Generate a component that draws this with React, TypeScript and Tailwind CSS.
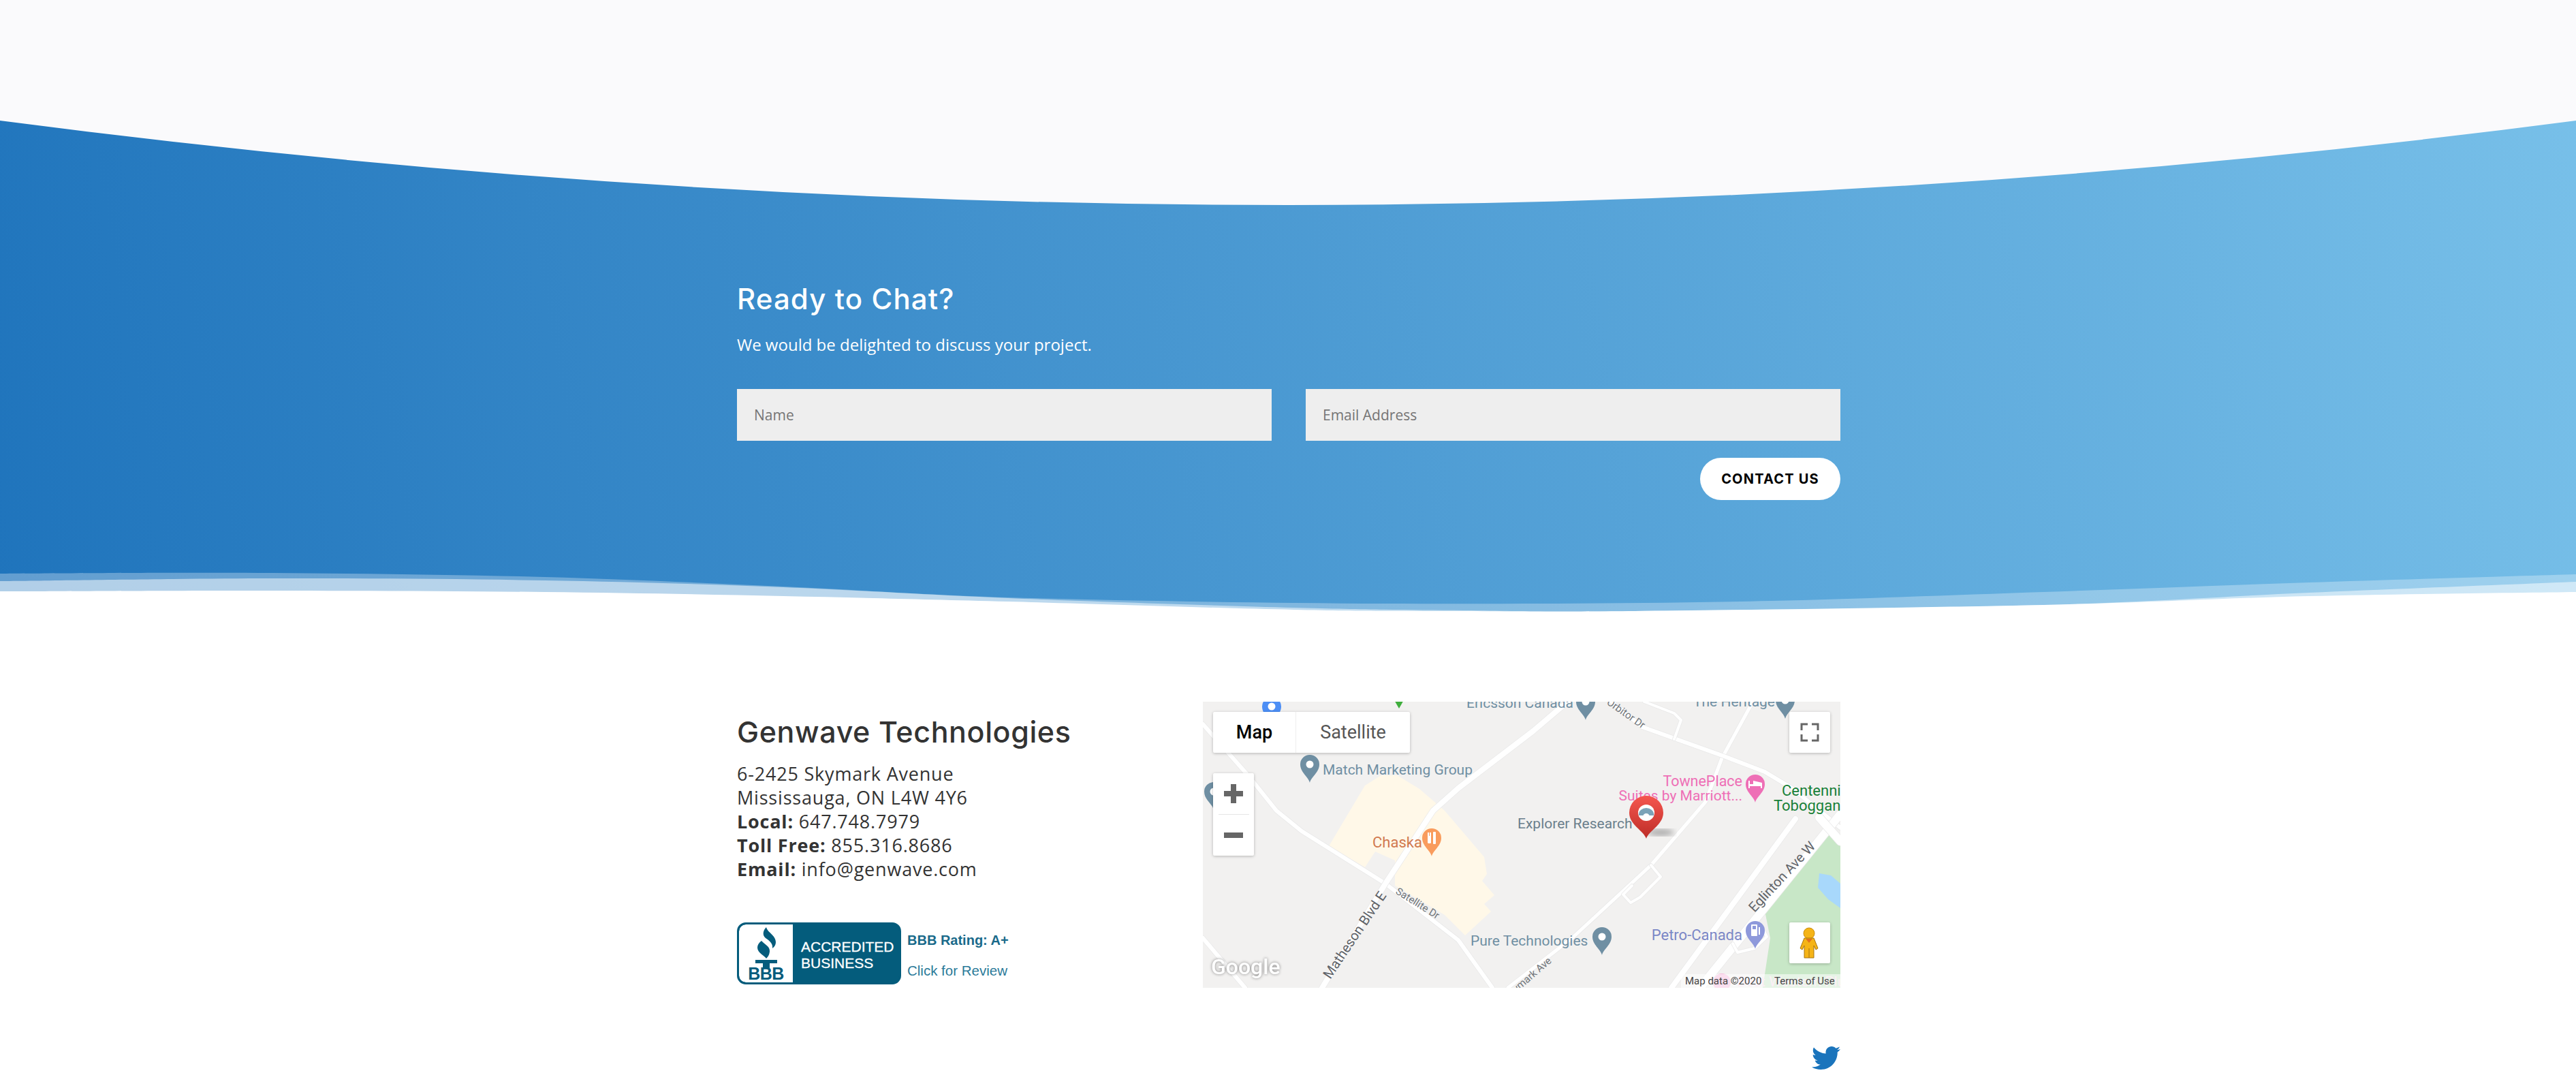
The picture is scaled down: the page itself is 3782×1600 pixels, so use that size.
import { FaTwitter } from "react-icons/fa";

type Pt = [number, number];

// catmull-rom through measured points, gives a soft wave edge
function smooth(pts: Pt[]) {
  let d = `M${pts[0][0]} ${pts[0][1]}`;
  for (let i = 0; i < pts.length - 1; i++) {
    const p0 = pts[Math.max(i - 1, 0)];
    const p1 = pts[i];
    const p2 = pts[i + 1];
    const p3 = pts[Math.min(i + 2, pts.length - 1)];
    d += ` C${p1[0] + (p2[0] - p0[0]) / 6} ${p1[1] + (p2[1] - p0[1]) / 6} ${p2[0] - (p3[0] - p1[0]) / 6} ${p2[1] - (p3[1] - p1[1]) / 6} ${p2[0]} ${p2[1]}`;
  }
  return d;
}

const below = (pts: Pt[]) => `${smooth(pts)} V120 H0 Z`;

// y is relative to the top of the wave svg (page y - 830)
const DARK_EDGE: Pt[] = [[0, 12], [400, 11], [800, 17], [1150, 31], [1480, 47], [1900, 55], [2270, 56], [2600, 52], [3000, 39], [3390, 25], [3782, 13]];
const MID_EDGE: Pt[] = [[0, 23], [400, 19], [800, 22], [1150, 32], [1480, 48], [1900, 62], [2150, 66], [2400, 67], [3000, 58], [3390, 40], [3782, 24]];
const WHITE_EDGE: Pt[] = [[0, 38], [400, 37], [800, 39], [1150, 45], [1480, 53], [1900, 65], [2150, 67], [2400, 67], [3000, 58], [3390, 45], [3782, 39]];

function Wave() {
  return (
    <svg className="absolute bottom-0 left-0 h-[120px] w-full" viewBox="0 0 3782 120" preserveAspectRatio="none">
      <path d={below(DARK_EDGE)} fill="#fff" fillOpacity={0.3} />
      <path d={below(MID_EDGE)} fill="#fff" fillOpacity={0.5} />
      <path d={below(WHITE_EDGE)} fill="#fff" />
    </svg>
  );
}

function Pin({ x, y, color, children }: { x: number; y: number; color: string; children?: React.ReactNode }) {
  return (
    <g transform={`translate(${x} ${y})`}>
      <path d="M0 27C-2 18-14 12-14 0A14 14 0 1 1 14 0C14 12 2 18 0 27Z" fill={color} />
      {children ?? <circle r={5.5} fill="#fff" />}
    </g>
  );
}

function Road({ d, w = 8 }: { d: string; w?: number }) {
  return (
    <g fill="none" strokeLinejoin="round" strokeLinecap="round">
      <path d={d} stroke="#e9e9e9" strokeWidth={w + 1.5} />
      <path d={d} stroke="#fff" strokeWidth={w} />
    </g>
  );
}

const POI = "#6f8fa3";

function MapCanvas() {
  return (
    <svg className="absolute inset-0 h-full w-full font-['Roboto',sans-serif]" viewBox="0 0 936 420">
      <defs>
        <linearGradient id="redpin" x1="0" y1="0" x2="0" y2="1">
          <stop offset="0" stopColor="#f5564f" />
          <stop offset="1" stopColor="#bd2d27" />
        </linearGradient>
        <filter id="pinblur"><feGaussianBlur stdDeviation="4" /></filter>
      </defs>
      <rect width="936" height="420" fill="#f2f1f0" />

      {/* areas */}
      <path d="M185 212L238 123L262 108L285 108L318 128L355 160L413 228L417 253L410 263L428 284L413 297L423 308L385 343L355 313L282 270L282 233L253 220L238 243Z" fill="#fff8e8" />
      <path d="M917 192L936 210V420H822L833 347L825 307L892 220Z" fill="#c8e7c7" />
      <path d="M905 252L922 255L936 267V303L918 290L903 273Z" fill="#a8d8fb" />

      {/* roads */}
      <Road d="M0 33L68 110L108 160L145 190L268 267L375 350L425 420" w={6} />
      <Road d="M0 347L62 420" w={6} />
      <Road d="M175 420L268 267L338 160L375 127L485 43L545 -8" w={8} />
      <Road d="M448 420L542 347L658 240L738 147L762 83L802 10L812 -8" w={5} />
      <Road d="M658 240L672 257L642 287L628 295L617 283L630 270" w={4} />
      <Road d="M590 -8L645 37L765 80L825 103L865 127L936 185" w={6} />
      <Road d="M648 0L692 17L702 27L692 55" w={4} />
      <Road d="M688 420L870 172" w={8} />
      <Road d="M730 420L936 165" w={12} />
      <Road d="M905 170L936 205" w={12} />
      <Road d="M820 330L828 345L810 362L785 368L778 355" w={4} />

      {/* pins */}
      <Pin x={101} y={7} color="#4c8ef5" />
      <path d="M280 -4H296L288 10Z" fill="#3fae3c" />
      <Pin x={157} y={92} color={POI} />
      <Pin x={16} y={132} color={POI} />
      <Pin x={562} y={0} color={POI} />
      <Pin x={855} y={-2} color={POI} />
      <Pin x={586} y={345} color={POI} />
      <Pin x={336} y={200} color="#f99c5d">
        <rect x={-6} y={-8} width={2} height={7} fill="#fff" />
        <rect x={-3} y={-8} width={2} height={7} fill="#fff" />
        <rect x={-6} y={-3} width={5} height={11} rx={1.5} fill="#fff" />
        <rect x={2} y={-9} width={4} height={18} rx={1} fill="#fff" />
      </Pin>
      <Pin x={811} y={121} color="#ee6fb6">
        <path d="M-10-5V6H-8V3H8V6H10V-2L-3-5V0H-8V-5Z" fill="#fff" />
      </Pin>
      <Pin x={811} y={336} color="#8e99db">
        <rect x={-6} y={-9} width={9} height={17} rx={1} fill="#fff" />
        <rect x={-4} y={-7} width={5} height={5} fill="#8e99db" />
        <rect x={5} y={-5} width={2} height={11} fill="#fff" />
      </Pin>
      <circle cx={762} cy={412} r={13} fill="#f6b8dc" />

      {/* labels */}
      <g fontSize={21}>
        <text x={176} y={107} fill={POI}>Match Marketing Group</text>
        <text x={249} y={214} fill="#d1794f" fontSize={22}>Chaska</text>
        <text x={387} y={9} fill={POI}>Ericsson Canada</text>
        <text x={720} y={7} fill={POI}>The Heritage</text>
        <text x={393} y={358} fill={POI}>Pure Technologies</text>
        <text x={462} y={186} fill="#6b7f8c">Explorer Research</text>
        <text x={792} y={124} textAnchor="end" fill="#ee6fb6" fontSize={21.5}>TownePlace</text>
        <text x={792} y={145} textAnchor="end" fill="#ee6fb6">Suites by Marriott...</text>
        <text x={850} y={138} fill="#188038" fontSize={22}>Centennial</text>
        <text x={838} y={160} fill="#188038" fontSize={22}>Tobogganing</text>
        <text x={792} y={350} textAnchor="end" fill="#7b87c6" fontSize={22}>Petro-Canada</text>
        <text x={784} y={418} fill="#f9dcec">Best Western Plus</text>
      </g>
      <g fill="#70757a" fontSize={15}>
        <text transform="translate(282 281) rotate(32)">Satellite Dr</text>
        <text transform="translate(592 3) rotate(35)">Orbitor Dr</text>
        <text transform="translate(448 438) rotate(-41)">Skymark Ave</text>
      </g>
      <g fill="#5f6368" fontSize={20}>
        <text transform="translate(187 408) rotate(-56)">Matheson Blvd E</text>
        <text transform="translate(810 310) rotate(-47)">Eglinton Ave W</text>
      </g>
      <text x={12} y={400} fill="#fff" fontSize={32} fontWeight={500} className="[filter:drop-shadow(0_0_2px_rgba(0,0,0,0.45))]">Google</text>

      {/* place marker */}
      <ellipse cx={672} cy={192} rx={20} ry={5} fill="#a8a8a8" filter="url(#pinblur)" />
      <g transform="translate(651 163)">
        <path d="M0 38C-4 26-25 18-25 0A25 25 0 1 1 25 0C25 18 4 26 0 38Z" fill="url(#redpin)" />
        <circle r={12} fill="#fff" />
        <path d="M-11 2A11 9 0 0 1 11 2V4H-11Z" fill="#7ca3b8" />
        <circle cy={6} r={5} fill="#fff" />
      </g>

      {/* attribution */}
      <rect x={702} y={400} width={234} height={20} fill="#fff" fillOpacity={0.55} />
      <g fill="#444" fontSize={15}>
        <text x={708} y={415}>Map data ©2020</text>
        <text x={839} y={415}>Terms of Use</text>
      </g>
    </svg>
  );
}

function MapEmbed() {
  const ctrl = "absolute rounded-[2px] bg-white shadow-[0_1px_4px_rgba(0,0,0,0.25)]";
  return (
    <div className="relative h-[420px] w-[936px] shrink-0 overflow-hidden">
      <MapCanvas />

      <div className={`${ctrl} left-[15px] top-[15px] flex h-[60px] w-[289px] items-center text-[27px] font-['Roboto',sans-serif]`}>
        <div className="flex h-full w-[122px] items-center justify-center border-r border-[#eee] font-medium text-black">Map</div>
        <div className="flex h-full flex-1 items-center justify-center text-[#565656]">Satellite</div>
      </div>

      <div className={`${ctrl} left-[15px] top-[105px] h-[121px] w-[60px]`}>
        <svg className="h-full w-full" viewBox="0 0 60 121" fill="#666">
          <rect x={16} y={26} width={28} height={8} />
          <rect x={26} y={16} width={8} height={28} />
          <rect x={8} y={60} width={45} height={1} fill="#e6e6e6" />
          <rect x={16} y={87} width={28} height={8} />
        </svg>
      </div>

      <div className={`${ctrl} left-[861px] top-[15px] h-[60px] w-[60px]`}>
        <svg className="h-full w-full" viewBox="0 0 60 60" fill="none" stroke="#666" strokeWidth={3}>
          <path d="M18 27V18H27M33 18H42V27M42 33V42H33M27 42H18V33" />
        </svg>
      </div>

      <div className={`${ctrl} left-[861px] top-[324px] h-[60px] w-[60px]`}>
        <svg className="h-full w-full" viewBox="0 0 60 60">
          <circle cx={29} cy={16} r={8} fill="#f5b417" stroke="#c98c0c" />
          <path d="M22 23H36L42 38L39 40L36 34V52H22V34L19 40L16 38Z" fill="#f5b417" stroke="#a87510" />
          <path d="M24 24H34L29 30Z" fill="#e2711d" />
          <path d="M29 38V52" stroke="#a87510" />
        </svg>
      </div>
    </div>
  );
}

function BbbBadge() {
  return (
    <div className="mt-[61px] flex items-start gap-[9px] font-['Liberation_Sans',Arial,sans-serif]">
      <div className="flex h-[91px] w-[241px] overflow-hidden rounded-[13px] border-[3px] border-[#045c7c] bg-[#045c7c]">
        <div className="flex w-[79px] flex-col items-center rounded-l-[10px] bg-white pt-[4px]">
          <svg className="h-[60px] w-[34px]" viewBox="0 0 34 60" fill="#045c7c">
            <path d="M17 0C19 8 31 12 31 22C31 26 29 29 26 31C27 24 22 20 16 16C11 12 12 5 17 0Z" />
            <path d="M10 20C14 25 23 28 22 36C21.500 41 19 44 17 46C15 42 4 38 4 30C4 26 6 23 10 20Z" />
            <rect x={1} y={48} width={32} height={5} />
            <rect x={12} y={53} width={10} height={7} />
          </svg>
          <span className="mt-[-1px] text-[25px] leading-[18px] font-bold tracking-[-0.5px] text-[#045c7c]">BBB</span>
        </div>
        <div className="flex flex-1 flex-col pl-[12px] pt-[21px] text-[21px] leading-[24px] text-white [-webkit-text-stroke:0.3px_white]">
          <span>ACCREDITED</span>
          <span>BUSINESS</span>
        </div>
      </div>
      <div className="flex flex-col gap-[21px] pt-[14px]">
        <span className="text-[20px] leading-[24px] font-bold text-[#1a6a8a]">BBB Rating: A+</span>
        <span className="text-[20.5px] leading-[24px] text-[#2b7a99]">Click for Review</span>
      </div>
    </div>
  );
}

export default function App() {
  return (
    <div className="h-[1600px] w-full overflow-hidden bg-white">
      {/* contact banner */}
      <section className="relative h-[950px] bg-[linear-gradient(80deg,#1f74bc,#78c0e9)] font-['Open_Sans',sans-serif]">
        <svg className="absolute left-0 top-0 h-[310px] w-full" viewBox="0 0 3782 310" preserveAspectRatio="none">
          <path d="M0 0H3782V177Q1891 425 0 177Z" fill="#fafafc" />
        </svg>
        <Wave />

        <div className="relative ml-[1082px] w-[1620px] pt-[412px]">
          <h2 className="font-['Inter',sans-serif] text-[42px] leading-[54px] font-medium tracking-[1.1px] text-white">Ready to Chat?</h2>
          <p className="mt-[24px] text-[24px] leading-[32px] text-white">We would be delighted to discuss your project.</p>
          <div className="mt-[49px] grid grid-cols-2 gap-[50px]">
            <input className="h-[76px] bg-[#eee] px-[25px] text-[21px] outline-none placeholder:text-[#757575]" placeholder="Name" />
            <input className="h-[76px] bg-[#eee] px-[25px] text-[21px] outline-none placeholder:text-[#757575]" placeholder="Email Address" />
          </div>
          <div className="mt-[25px] flex justify-end">
            <button className="h-[62px] w-[206px] rounded-full bg-white font-['Inter',sans-serif] text-[20px] font-bold tracking-[1.2px] text-black">CONTACT US</button>
          </div>
        </div>
      </section>

      {/* address + map */}
      <section className="ml-[1082px] flex w-[1620px] pt-[80px] text-[#333]">
        <div className="flex-1">
          <h3 className="mt-[16px] font-['Inter',sans-serif] text-[43px] leading-[56px] font-[450] tracking-[0.6px]">Genwave Technologies</h3>
          <div className="mt-[16px] font-['Open_Sans',sans-serif] text-[27px] leading-[35px] tracking-[0.8px]">
            <p>6-2425 Skymark Avenue</p>
            <p>Mississauga, ON L4W 4Y6</p>
            <p><b>Local:</b> 647.748.7979</p>
            <p><b>Toll Free:</b> 855.316.8686</p>
            <p><b>Email:</b> info@genwave.com</p>
          </div>
          <BbbBadge />
        </div>
        <MapEmbed />
      </section>

      <div className="ml-[1082px] mt-[82px] flex w-[1620px] justify-end">
        <FaTwitter className="h-[42px] w-[42px] text-[#1a74bc]" />
      </div>
    </div>
  );
}
